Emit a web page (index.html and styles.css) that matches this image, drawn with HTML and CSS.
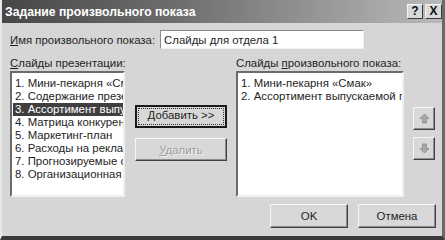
FILE: index.html
```html
<!DOCTYPE html>
<html lang="ru">
<head>
    <meta charset="UTF-8">
    <title>Задание произвольного показа</title>
    <link rel="stylesheet" href="styles.css">
</head>
<body>
    <div class="window">
        <div class="titlebar">
            <span class="title">Задание произвольного показа</span>
            <div class="title-buttons">
                <span class="tbtn">?</span>
                <span class="tbtn close">X</span>
            </div>
        </div>
        <div class="content">
            <div class="name-row">
                <label for="show-name"><u>И</u>мя произвольного показа:</label>
                <input type="text" id="show-name" value="Слайды для отдела 1">
            </div>
            <div class="lists">
                <div class="list-col">
                    <div class="list-label"><u>С</u>лайды презентации:</div>
                    <ul class="listbox">
                        <li>1. Мини-пекарня «Смак»</li>
                        <li>2. Содержание презентации</li>
                        <li class="selected">3. Ассортимент выпускаемой продукции</li>
                        <li>4. Матрица конкурентов</li>
                        <li>5. Маркетинг-план</li>
                        <li>6. Расходы на рекламу</li>
                        <li>7. Прогнозируемые объемы</li>
                        <li>8. Организационная структура</li>
                    </ul>
                </div>
                <div class="mid-col">
                    <button class="btn default"><span class="focus"><u>Д</u>обавить &gt;&gt;</span></button>
                    <button class="btn disabled"><u>У</u>далить</button>
                </div>
                <div class="list-col right">
                    <div class="list-label">Слайды <u>п</u>роизвольного показа:</div>
                    <ul class="listbox">
                        <li>1. Мини-пекарня «Смак»</li>
                        <li>2. Ассортимент выпускаемой продукции</li>
                    </ul>
                </div>
                <div class="arrow-col">
                    <button class="btn arrow">
                        <svg width="11" height="11" viewBox="0 0 11 11"><path d="M5.5 1 L10 5.5 H7.5 V10 H3.5 V5.5 H1 Z" fill="#a8a8a8" stroke="#8a8a8a" stroke-width="0.8"/></svg>
                    </button>
                    <button class="btn arrow">
                        <svg width="11" height="11" viewBox="0 0 11 11"><path d="M5.5 10 L10 5.5 H7.5 V1 H3.5 V5.5 H1 Z" fill="#a8a8a8" stroke="#8a8a8a" stroke-width="0.8"/></svg>
                    </button>
                </div>
            </div>
            <div class="footer">
                <button class="btn wide">OK</button>
                <button class="btn wide">Отмена</button>
            </div>
        </div>
    </div>
</body>
</html>
```

FILE: styles.css
```css
body {
    margin: 0;
    font-family: "Liberation Sans", Arial, sans-serif;
    font-size: 11.4px;
    color: #1e1e1e;
    background-color: #d6d6d6;
}
.window {
    width: 445px;
    height: 240px;
    box-sizing: border-box;
    background-color: #d6d6d6;
    border-right: 3px solid #6a6a6a;
    border-bottom: 4px solid #3a3a3a;
    border-left: 2px solid #e8e8e8;
    display: flex;
    flex-direction: column;
}
.titlebar {
    height: 23px;
    display: flex;
    align-items: center;
    justify-content: space-between;
    padding: 0 0 0 3px;
    background: linear-gradient(to right, #474747 0%, #6e6e6e 40%, #b9b9b9 100%);
}
.title {
    color: #fff;
    font-weight: bold;
    font-size: 12.2px;
}
.title-buttons {
    display: flex;
    gap: 2px;
}
.tbtn {
    width: 16px;
    height: 15px;
    box-sizing: border-box;
    background-color: #d9d9d9;
    border: 1px solid;
    border-color: #f4f4f4 #3c3c3c #3c3c3c #f4f4f4;
    font-weight: bold;
    font-size: 12px;
    line-height: 13px;
    text-align: center;
    color: #111;
}
.tbtn.close {
    width: 17px;
}
.content {
    flex: 1;
    padding: 7px 5px 0 8px;
    display: flex;
    flex-direction: column;
}
.name-row {
    display: flex;
    align-items: center;
    gap: 5px;
}
.name-row label {
    white-space: nowrap;
}
.name-row input {
    width: 204px;
    height: 19px;
    box-sizing: border-box;
    margin: 0;
    padding: 0 3px;
    font-family: inherit;
    font-size: 11.4px;
    color: #1e1e1e;
    background-color: #fff;
    border: 1px solid;
    border-color: #8a8a8a #f2f2f2 #f2f2f2 #8a8a8a;
    outline: none;
}
.lists {
    display: flex;
    margin-top: 8px;
}
.list-col {
    width: 115px;
    display: flex;
    flex-direction: column;
}
.list-col.right {
    width: 168px;
    margin-left: 9px;
}
.list-label {
    white-space: nowrap;
    height: 13px;
    line-height: 13px;
    margin-bottom: 1px;
}
.listbox {
    list-style: none;
    margin: 0;
    padding: 4px 0 0 1px;
    height: 126px;
    box-sizing: border-box;
    background-color: #fff;
    border: 2px solid;
    border-color: #6b6b6b #f0f0f0 #f0f0f0 #6b6b6b;
    overflow: hidden;
}
.listbox li {
    height: 13px;
    line-height: 13px;
    padding-left: 2px;
    white-space: nowrap;
    overflow: hidden;
}
.listbox li.selected {
    background-color: #3f3f3f;
    color: #fff;
}
.mid-col {
    width: 92px;
    margin-left: 10px;
    padding-top: 48px;
    display: flex;
    flex-direction: column;
    gap: 10px;
}
.btn {
    font-family: inherit;
    font-size: 11.4px;
    color: #1e1e1e;
    background-color: #d8d8d8;
    border: 1px solid;
    border-color: #f6f6f6 #404040 #404040 #f6f6f6;
    box-shadow: inset -1px -1px 0 #8e8e8e;
    padding: 0;
    margin: 0;
}
.mid-col .btn {
    height: 23px;
}
.btn.default {
    border: 2px solid #1a1a1a;
    box-shadow: none;
    padding: 1px;
}
.btn .focus {
    display: block;
    height: 100%;
    box-sizing: border-box;
    border: 1px dotted #333;
    line-height: 13px;
}
.btn.disabled {
    color: #9c9c9c;
    text-shadow: 1px 1px 0 #f2f2f2;
}
.arrow-col {
    margin-left: 9px;
    padding-top: 50px;
    display: flex;
    flex-direction: column;
    gap: 7px;
}
.btn.arrow {
    width: 22px;
    height: 23px;
    display: flex;
    align-items: center;
    justify-content: center;
}
.footer {
    display: flex;
    justify-content: flex-end;
    gap: 10px;
    margin-top: 7px;
    padding-right: 1px;
}
.btn.wide {
    width: 78px;
    height: 24px;
}
```
